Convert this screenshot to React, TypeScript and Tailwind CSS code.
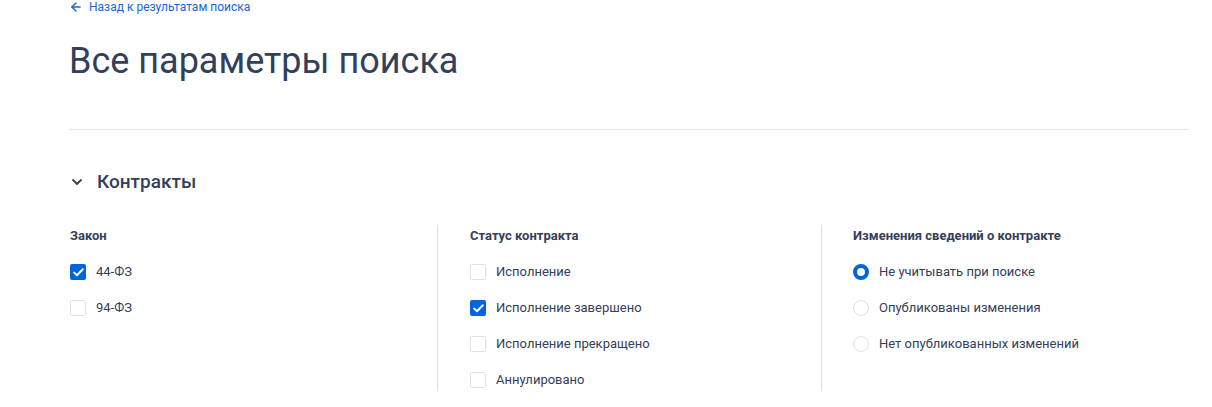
import { ArrowLeft, ChevronDown } from 'lucide-react'

type Opt = { label: string; checked?: boolean }

const law: Opt[] = [{ label: '44-ФЗ', checked: true }, { label: '94-ФЗ' }]

const status: Opt[] = [
  { label: 'Исполнение' },
  { label: 'Исполнение завершено', checked: true },
  { label: 'Исполнение прекращено' },
  { label: 'Аннулировано' },
]

const changes: Opt[] = [
  { label: 'Не учитывать при поиске', checked: true },
  { label: 'Опубликованы изменения' },
  { label: 'Нет опубликованных изменений' },
]

function Checkbox({ checked }: { checked?: boolean }) {
  if (checked) {
    return (
      <span className="flex h-4 w-4 shrink-0 items-center justify-center rounded-[2px] bg-[#0065dd]">
        <svg width="11" height="9" viewBox="0 0 11 9" fill="none">
          <path d="M1.2 4.6 4 7.3 9.8 1.3" stroke="#fff" strokeWidth="2" strokeLinecap="round" strokeLinejoin="round" />
        </svg>
      </span>
    )
  }
  return <span className="h-4 w-4 shrink-0 rounded-[2px] border border-[#dde2e8] bg-white" />
}

function Radio({ checked }: { checked?: boolean }) {
  return checked ? (
    <span className="h-4 w-4 shrink-0 rounded-full border-[4px] border-[#0065dd] bg-white" />
  ) : (
    <span className="h-4 w-4 shrink-0 rounded-full border border-[#dde2e8] bg-white" />
  )
}

function Group({ title, items, radio }: { title: string; items: Opt[]; radio?: boolean }) {
  return (
    <div className="pt-[3px]">
      <div className="text-[13px] font-bold leading-4 text-[#334059]">{title}</div>
      <div className="mt-5 flex flex-col gap-5">
        {items.map(it => (
          <label key={it.label} className="flex h-4 items-center gap-[10px]">
            {radio ? <Radio checked={it.checked} /> : <Checkbox checked={it.checked} />}
            <span className="text-[13px] leading-4 text-[#334059]">{it.label}</span>
          </label>
        ))}
      </div>
    </div>
  )
}

export default function App() {
  return (
    <div className="min-h-[407px] bg-white font-['Roboto',sans-serif]">
      <div className="ml-[69px] w-[1119px]">
        <a className="flex h-[14px] items-center gap-[6px] text-[12px] leading-[14px] text-[#1466dc]">
          <ArrowLeft size={14} strokeWidth={2.5} />
          Назад к результатам поиска
        </a>

        <h1 className="mt-[26px] text-[36px] font-normal leading-[43px] text-[#334059]">Все параметры поиска</h1>

        <div className="mt-[46px] border-t border-[#e1e6ec]" />

        <div className="mt-[40px] flex h-6 items-center">
          <ChevronDown size={16} strokeWidth={2.75} className="text-[#334059]" />
          <span className="ml-[12px] text-[19px] font-medium leading-6 text-[#334059]">Контракты</span>
        </div>

        <div className="mt-[31px] flex h-[166px]">
          <div className="w-[368px] pl-px">
            <Group title="Закон" items={law} />
          </div>
          <div className="w-[384px] border-l border-[#e1e6ec] pl-[32px]">
            <Group title="Статус контракта" items={status} />
          </div>
          <div className="border-l border-[#e1e6ec] pl-[31px]">
            <Group title="Изменения сведений о контракте" items={changes} radio />
          </div>
        </div>
      </div>
    </div>
  )
}
